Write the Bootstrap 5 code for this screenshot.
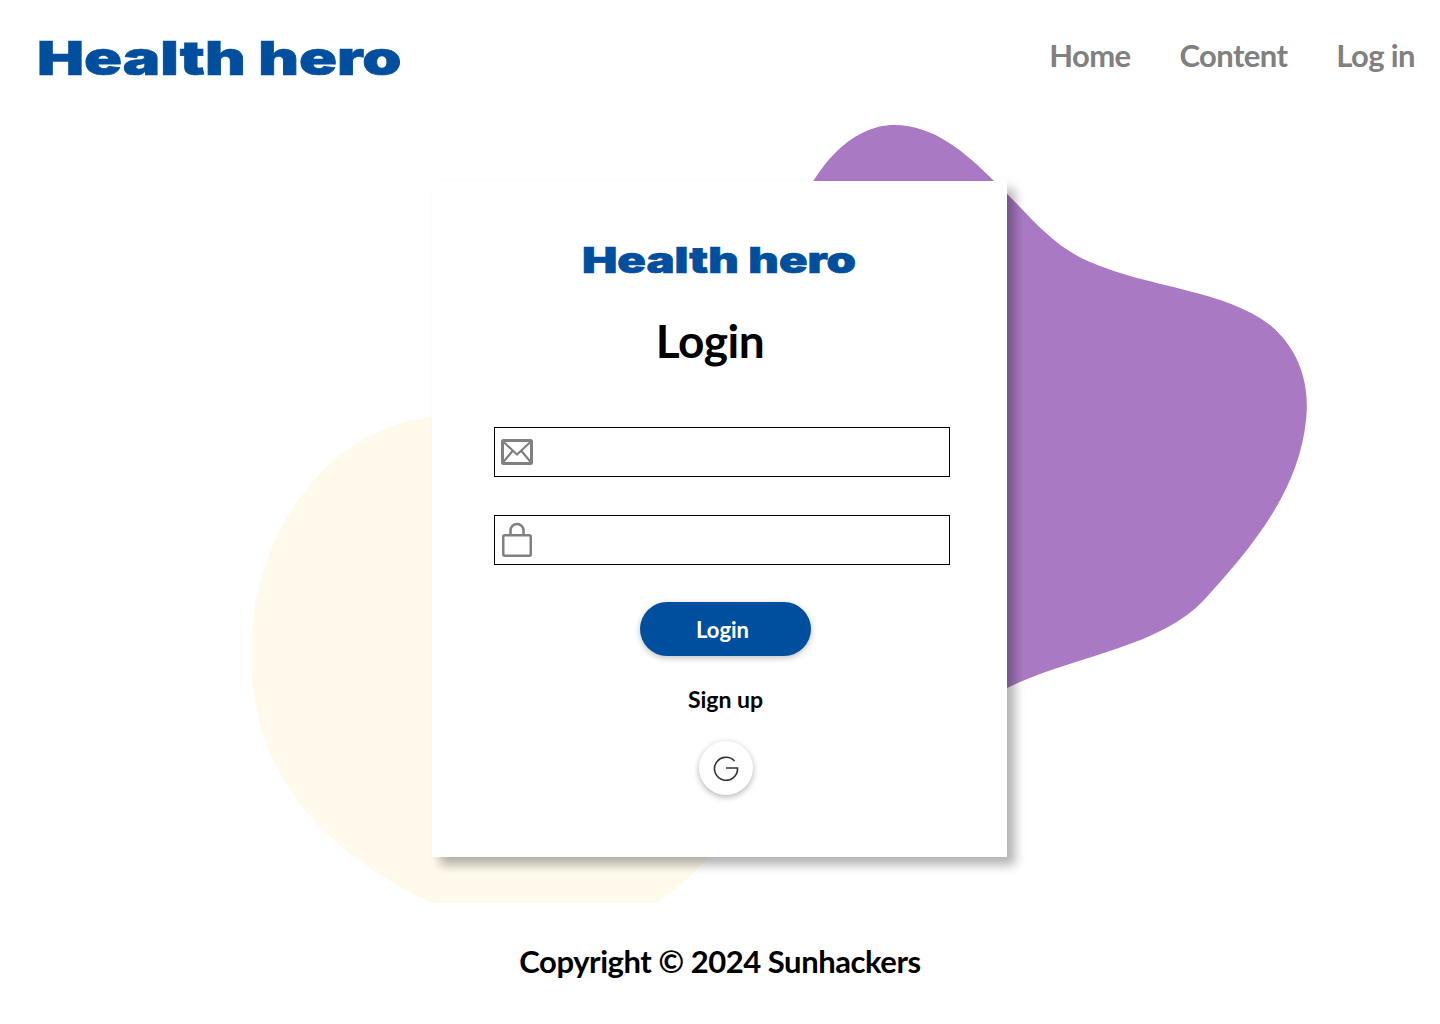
<!DOCTYPE html>
<html lang="en">
<head>
    <meta charset="UTF-8">
    <meta name="viewport" content="width=device-width, initial-scale=1.0">
    <title>Health hero - Login</title>
    <link href="https://cdn.jsdelivr.net/npm/bootstrap@5.3.0/dist/css/bootstrap.min.css" rel="stylesheet">
    <script src="https://cdn.jsdelivr.net/npm/bootstrap@5.3.0/dist/js/bootstrap.bundle.min.js"></script>
    <style>
        body {
            font-family: Lato, "Liberation Sans", sans-serif;
            background-color: #fff;
            color: #000;
            min-height: 1024px;
        }

        .logo-text {
            display: inline-block;
            font-family: Inter, "Liberation Sans", sans-serif;
            font-weight: 900;
            color: #004f9f;
            line-height: 1;
            white-space: nowrap;
            transform-origin: left center;
            -webkit-text-stroke: .7px #004f9f;
        }

        .top-bar {
            height: 115px;
            padding: 0 25px 0 37px;
        }

        .top-bar .logo-text {
            font-size: 47px;
            transform: scaleX(1.335);
        }

        .top-link {
            font-size: 31px;
            font-weight: 700;
            letter-spacing: -.6px;
            color: #808080;
            text-decoration: none;
        }

        .top-links {
            gap: 49px;
            margin-top: -4px;
        }

        /* area with the two blobs behind the card */
        .hero-stage {
            position: relative;
            height: 788px;
            overflow: hidden;
            padding-top: 66px;
        }

        .blob-layer {
            position: absolute;
            left: 0;
            top: 0;
        }

        .login-box {
            position: relative;
            width: 575px;
            height: 676px;
            margin-left: 432px;
            padding: 61px 57px 0 62px;
            background-color: #fff;
            box-shadow: 8px 8px 10px rgba(0, 0, 0, .3);
        }

        .login-box .logo-text {
            font-size: 36px;
            transform: scaleX(1.31);
            margin-left: 88px;
        }

        .login-title {
            font-size: 46px;
            font-weight: 700;
            letter-spacing: -.5px;
            line-height: 1;
            margin: 39px 0 0 0;
        }

        .field-box {
            height: 50px;
            border: 1px solid #000;
            padding-left: 6px;
            gap: 8px;
        }

        .field-box .form-control {
            border: 0;
            border-radius: 0;
            box-shadow: none;
            background: transparent;
        }

        .field-first { margin-top: 63px; }
        .field-second { margin-top: 38px; }
        .btn-row { margin-top: 37px; padding-left: 7px; }
        .signup-row { margin-top: 26px; padding-left: 7px; line-height: 34px; }
        .google-row { margin-top: 22px; padding-left: 7px; }

        .login-btn {
            width: 171px;
            height: 54px;
            border: 0;
            border-radius: 27px;
            padding: 0 6px 0 0;
            background-color: #004f9f;
            color: #fff;
            font-size: 22px;
            font-weight: 700;
            box-shadow: 0 2px 6px rgba(0, 0, 0, .25);
        }

        .signup-link {
            font-size: 23px;
            font-weight: 700;
            color: #000;
            text-decoration: none;
        }

        .google-btn {
            width: 54px;
            height: 54px;
            border-radius: 50%;
            background-color: #fff;
            box-shadow: 0 2px 6px rgba(0, 0, 0, .3);
        }

        .copy-line {
            font-size: 31px;
            font-weight: 700;
            letter-spacing: -.45px;
            line-height: 1;
            padding-top: 43px;
        }
    </style>
</head>
<body>

    <!-- Barra superior -->
    <header class="top-bar d-flex justify-content-between align-items-center">
        <span class="logo-text">Health hero</span>
        <nav class="top-links d-flex">
            <a class="top-link" href="#">Home</a>
            <a class="top-link" href="#">Content</a>
            <a class="top-link" href="#">Log in</a>
        </nav>
    </header>

    <main class="hero-stage">
        <svg class="blob-layer" width="1440" height="788" viewBox="0 115 1440 788" aria-hidden="true">
            <path fill="#aa79c4" d="M788 240C810 165 853 125 894 125C934 125 965 152 994 181C1030 215 1050 245 1090 262C1150 288 1225 290 1270 325C1300 350 1310 385 1306 420C1299 490 1254 545 1204 600C1159 648 1075 655 1007 688L790 720Z"/>
            <path fill="#fffaeb" d="M470 414C385 413 320 452 279 532C249 592 244 660 259 720C279 800 340 860 432 903L655 903C680 888 700 870 720 840L720 414Z"/>
        </svg>

        <section class="login-box">
            <span class="logo-text">Health hero</span>
            <h1 class="login-title text-center pe-4">Login</h1>

            <form class="d-flex flex-column">
                <div class="field-box d-flex align-items-center field-first">
                    <svg class="flex-shrink-0" width="32" height="28" viewBox="0 0 32 28" fill="none" stroke="#808080" stroke-width="3" aria-hidden="true">
                        <rect x="1.5" y="2.5" width="29" height="23" rx="1"/>
                        <path stroke-width="2.2" d="M1.5 3L16 16.5L30.5 3M1.5 25L12 12.5M30.5 25L20 12.5"/>
                    </svg>
                    <input class="form-control" type="email" aria-label="Email">
                </div>
                <div class="field-box d-flex align-items-center field-second">
                    <svg class="flex-shrink-0" width="32" height="36" viewBox="0 0 32 36" fill="none" stroke="#808080" stroke-width="2.5" aria-hidden="true">
                        <rect x="2.25" y="13.25" width="27.5" height="20.5" rx="1.5"/>
                        <path d="M9.5 13V8.5A6.5 6.5 0 0 1 22.5 8.5V13"/>
                    </svg>
                    <input class="form-control" type="password" aria-label="Password">
                </div>
                <div class="text-center btn-row">
                    <button type="button" class="login-btn">Login</button>
                </div>
                <div class="text-center signup-row">
                    <a class="signup-link" href="#">Sign up</a>
                </div>
                <div class="d-flex justify-content-center google-row">
                    <a class="google-btn d-flex align-items-center justify-content-center" href="#" aria-label="Google">
                        <svg width="26" height="26" viewBox="0 0 26 26" fill="none" stroke="#333" stroke-width="1.6" aria-hidden="true">
                            <path d="M21.5 6A11.5 11.5 0 1 0 24.5 13H13"/>
                        </svg>
                    </a>
                </div>
            </form>
        </section>
    </main>

    <footer class="copy-line text-center">Copyright © 2024 Sunhackers</footer>

</body>
</html>
